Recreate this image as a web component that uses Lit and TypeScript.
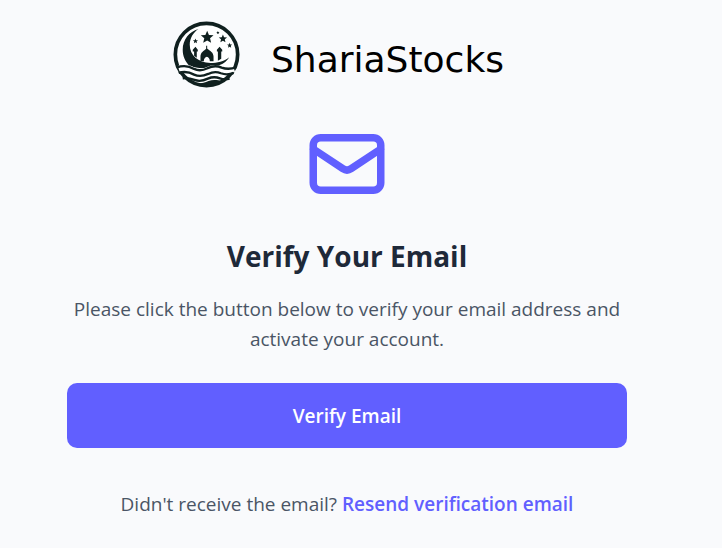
import { LitElement, html, css, svg } from "lit";
import { customElement } from "lit/decorators.js";

/** Five-pointed star path around a centre point. */
const star = (cx: number, cy: number, r: number) => {
  const points = Array.from({ length: 10 }, (_, i) => {
    const radius = i % 2 ? r * 0.45 : r;
    const angle = (Math.PI / 5) * i - Math.PI / 2;
    return `${(cx + radius * Math.cos(angle)).toFixed(1)},${(cy + radius * Math.sin(angle)).toFixed(1)}`;
  });
  return svg`<polygon points=${points.join(" ")} />`;
};

@customElement("brand-logo")
export class BrandLogo extends LitElement {
  static styles = css`
    :host {
      display: flex;
      align-items: center;
      box-sizing: border-box;
      width: 100%;
      max-width: 348px;
      margin: 0 auto;
      gap: 14px;
      color: #000;
    }
    .emblem {
      width: 67px;
      height: 67px;
      flex: none;
      color: #10201f;
    }
    .name {
      flex: 1;
      font: 400 36px/40px "DejaVu Sans", sans-serif;
      padding-top: 11px;
      text-align: center;
    }
  `;

  render() {
    return html`
      <svg class="emblem" viewBox="0 0 200 200" fill="currentColor" aria-hidden="true">
        <circle cx="100" cy="100" r="93" fill="#fff" stroke="currentColor" stroke-width="11" />
        <path d="M76 24C48 32 29 56 29 86c0 20 8 36 20 48 16 3 30 8 50 6 30-2 56-10 69-32-16 13-36 17-56 17-37 0-62-23-62-54 0-20 11-37 26-47z" />
        ${star(102, 49, 20)} ${star(149, 53, 13)} ${star(67, 60, 8)}
        ${star(134, 35, 5)} ${star(169, 73, 8)}
        <path d="M82 120v-14c0-12 9-17 19-24 10 7 20 12 20 24v14h-11c0-8-4-11-9-13-5 2-9 5-9 13z" />
        <path d="M99 74h3v12h-3z" />
        <path d="M59 86l8-9 7 9v5h-3v19l-8-6V91h-4zM131 86l8-9 8 9v5h-3v22l-10 6V91h-3z" />
        <g fill="none" stroke="#fff" stroke-width="18">
          <path d="M17 143c20-7 32-3 46 5 16 8 28 4 40-2 16-8 28-8 42-2 12 5 24 4 37-1" />
        </g>
        <g fill="none" stroke="currentColor" stroke-width="7">
          <path d="M11 139c22-8 38-4 52 4 16 8 28 4 40-2 16-8 28-8 42-2 16 6 28 5 44-1" />
          <path d="M17 155c20-6 33-2 46 5 17 8 29 4 42-2 14-7 26-7 38-2 14 5 26 4 38-1" />
          <path d="M29 171c15-2 25 1 35 5 16 6 28 2 40-4 14-6 25-5 36-1 11 4 21 3 29 1" />
        </g>
        <path d="M60 185c20 4 33-1 46-6 14-5 27-3 42 1-24 18-63 20-88 5z" />
      </svg>
      <span class="name">ShariaStocks</span>
    `;
  }
}

@customElement("app-root")
export class AppRoot extends LitElement {
  static styles = css`
    :host {
      display: block;
      box-sizing: border-box;
      min-height: 100vh;
      padding: 21px 28px 24px 0;
      background: #f9fafc;
      color: #4a5565;
      font: 400 19px/30px "Open Sans", "Noto Sans", sans-serif;
      text-align: center;
    }
    .card {
      display: flex;
      flex-direction: column;
      box-sizing: border-box;
      max-width: 600px;
      margin: 0 auto;
      padding: 0 20px;
    }
    .mail {
      width: 90px;
      height: 90px;
      margin: 31px auto 28px;
      color: #615fff;
    }
    h1 {
      margin: 0 0 19px;
      color: #1e2939;
      font-size: 28px;
      font-weight: 700;
      line-height: 38px;
    }
    p {
      margin: 0;
    }
    .verify {
      height: 65px;
      margin: 29px 0 41px;
      border: 0;
      border-radius: 10px;
      background: #615fff;
      color: #fff;
      font: inherit;
      font-weight: 600;
      cursor: pointer;
    }
    a {
      color: #615fff;
      font-weight: 600;
      text-decoration: none;
    }
  `;

  render() {
    return html`
      <main class="card">
        <brand-logo></brand-logo>
        <svg class="mail" viewBox="0 0 24 24" fill="none" stroke="currentColor"
          stroke-width="2" stroke-linecap="round" stroke-linejoin="round" aria-hidden="true">
          <path d="M3 8l7.89 5.26a2 2 0 002.22 0L21 8M5 19h14a2 2 0 002-2V7a2 2 0 00-2-2H5a2 2 0 00-2 2v10a2 2 0 002 2z" />
        </svg>
        <h1>Verify Your Email</h1>
        <p>Please click the button below to verify your email address and activate your account.</p>
        <button class="verify" type="button">Verify Email</button>
        <p>Didn't receive the email? <a href="#resend">Resend verification email</a></p>
      </main>
    `;
  }
}
